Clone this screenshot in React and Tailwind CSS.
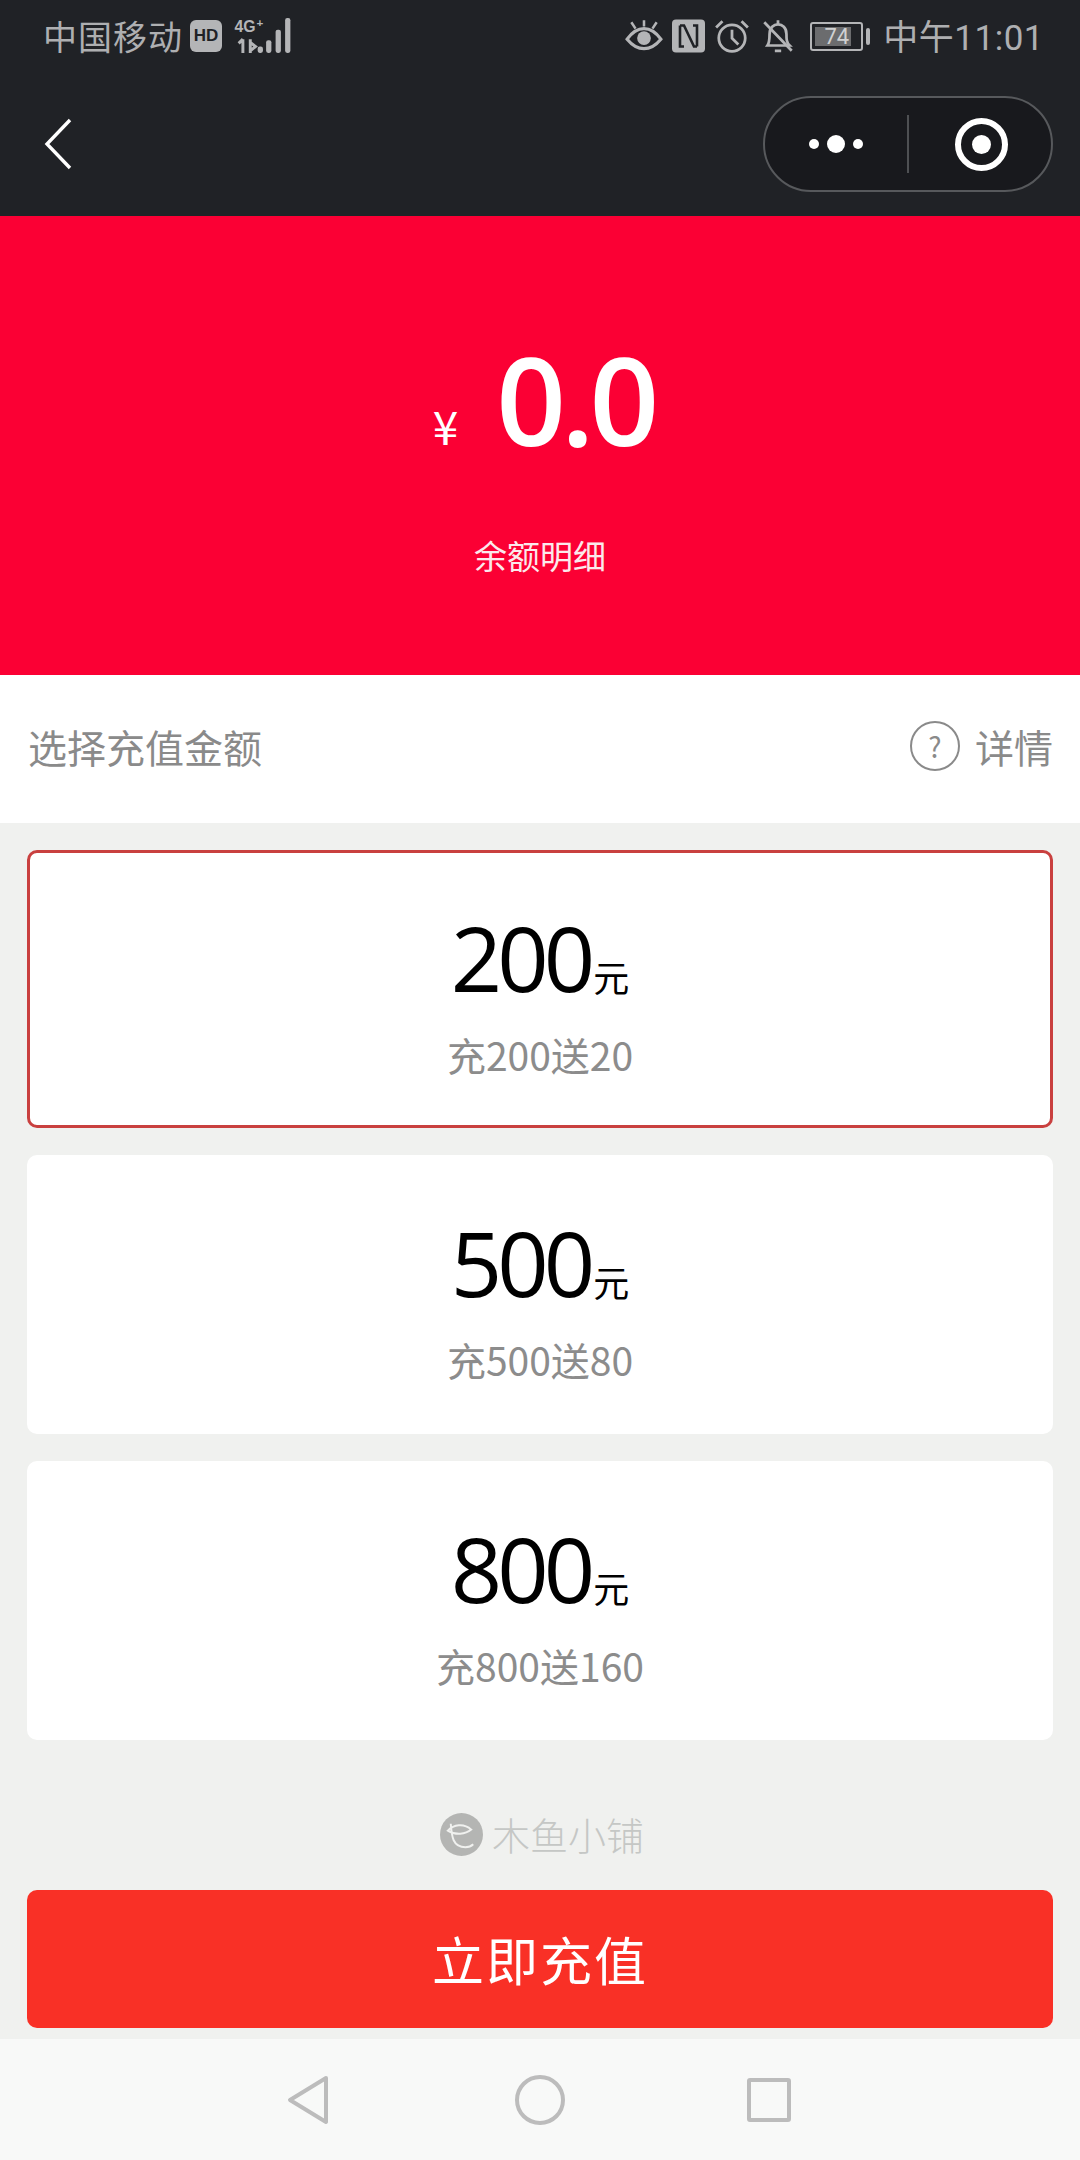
const cjk = "font-['Noto_Sans_CJK_SC','Noto_Sans',sans-serif]";

function Signal() {
  return (
    <svg width="60" height="38" viewBox="0 0 56 36" className="block">
      <text x="0" y="14" fontSize="15" fontWeight="700" fill="#b4b5b7" fontFamily="Liberation Sans">4G</text>
      <text x="21" y="9" fontSize="11" fontWeight="700" fill="#b4b5b7" fontFamily="Liberation Sans">+</text>
      <path d="M8 21v13M4 25l4-4M15 21v13M15 24l5 4-5 4" stroke="#b4b5b7" strokeWidth="2.8" fill="none" />
      <rect x="22" y="28" width="5" height="6" rx="2" fill="#b4b5b7" />
      <rect x="30" y="22" width="5" height="12" rx="2" fill="#b4b5b7" />
      <rect x="39" y="12" width="5" height="22" rx="2" fill="#b4b5b7" />
      <rect x="48" y="1" width="5" height="33" rx="2" fill="#b4b5b7" />
    </svg>
  );
}

function StatusBar() {
  return (
    <div className={`h-[72px] pl-[43px] pr-[36px] flex items-center justify-between text-[#aeafb1] ${cjk}`}>
      <div className="flex items-center">
        <span className="text-[34px] leading-none tracking-[1px]">中国移动</span>
        <span className="ml-[7px] w-[32px] h-[32px] rounded-[6px] bg-[#b4b5b7] text-[#202226] text-[17px] leading-[32px] font-bold text-center font-['Liberation_Sans',sans-serif]">HD</span>
        <span className="ml-[12px]"><Signal /></span>
      </div>
      <div className="flex items-center">
        <svg width="38" height="36" viewBox="0 0 36 34" fill="none" stroke="#b4b5b7" strokeWidth="3">
          <path d="M2 20c5-7 10-10 16-10s11 3 16 10c-5 6-10 9-16 9s-11-3-16-9z" />
          <circle cx="18" cy="19" r="6.5" fill="#b4b5b7" stroke="none" />
          <path d="M18 2v6M6 4l4 6M30 4l-4 6" strokeWidth="2.4" />
        </svg>
        <svg width="33" height="34" viewBox="0 0 33 33" className="ml-[9px]">
          <rect width="33" height="33" rx="4" fill="#b4b5b7" />
          <path d="M8 6h4l10 21h3M25 27V6h-4M8 6v21h4" fill="none" stroke="#202226" strokeWidth="2.6" />
        </svg>
        <svg width="36" height="36" viewBox="0 0 34 34" fill="none" stroke="#b4b5b7" strokeWidth="2.6" className="ml-[9px]">
          <circle cx="17" cy="19" r="12.5" />
          <path d="M17 11v8l6 6" />
          <path d="M2 9l6-6M32 9l-6-6" />
        </svg>
        <svg width="34" height="38" viewBox="0 0 32 36" fill="none" stroke="#b4b5b7" strokeWidth="2.6" className="ml-[11px]">
          <path d="M6 27c2-3 2-6 2-11 0-6 4-9 8-9s8 3 8 9c0 5 0 8 3 11z" />
          <path d="M13 32h6M16 3v4M3 5l26 27" />
        </svg>
        <div className="ml-[15px] w-[53px] h-[29px] rounded-[3px] border-2 border-[#b4b5b7] p-[3px] relative">
          <div className="h-full w-[36px] bg-[#6b6c6e]" />
          <span className="absolute inset-0 text-center text-[#d0d1d2] text-[22px] leading-[25px] font-['Roboto',sans-serif]">74</span>
        </div>
        <div className="ml-[3px] w-[4px] h-[17px] rounded-[2px] bg-[#b4b5b7]" />
        <span className="ml-[13px] text-[35px] leading-none tracking-[0.5px]">中午<span className="font-['Roboto',sans-serif]">11:01</span></span>
      </div>
    </div>
  );
}

function NavBar() {
  return (
    <div className="h-[144px] pl-[44px] pr-[27px] pt-[24px] flex justify-between items-start">
      <svg width="28" height="52" viewBox="0 0 28 52" fill="none" stroke="#ffffff" strokeWidth="3.4" className="mt-[22px]">
        <path d="M26 2L3 26l23 24" />
      </svg>
      <div className="w-[290px] h-[96px] rounded-[48px] border-2 border-[#57595c] bg-[#18191d] flex items-center">
        <div className="w-[142px] flex items-center justify-center gap-[8px]">
          <span className="w-[10px] h-[10px] rounded-full bg-white" />
          <span className="w-[18px] h-[18px] rounded-full bg-white" />
          <span className="w-[10px] h-[10px] rounded-full bg-white" />
        </div>
        <div className="w-[2px] h-[58px] bg-[#4e5053]" />
        <div className="flex-1 flex items-center justify-center pl-[2px]">
          <div className="w-[53px] h-[53px] rounded-full border-[6px] border-white flex items-center justify-center">
            <span className="w-[19px] h-[19px] rounded-full bg-white" />
          </div>
        </div>
      </div>
    </div>
  );
}

function Card({ amount, desc, active }) {
  return (
    <div className={`rounded-[10px] bg-white flex flex-col items-center ${active ? "h-[278px] border-[3px] border-[#c9403f] pt-[59px]" : "h-[279px] pt-[62px]"}`}>
      <div className="flex items-baseline h-[90px] text-black">
        <span className="text-[90px] leading-[90px] tracking-[-5px] font-['Open_Sans',sans-serif]">{amount}</span>
        <span className="ml-[3px] text-[36px] leading-none">元</span>
      </div>
      <div className="mt-[30px] text-[39px] leading-[44px] text-[#8c8c8c]">{desc}</div>
    </div>
  );
}

export default function App() {
  return (
    <div className={`w-[1080px] h-[2160px] flex flex-col bg-[#f0f1ef] overflow-hidden ${cjk}`}>
      <div className="bg-[#202226]">
        <StatusBar />
        <NavBar />
      </div>
      <div className="h-[459px] bg-[#fb0034] flex flex-col items-center text-white">
        <div className="h-[130px] mt-[118px] pl-[7px] flex items-end">
          <span className="text-[46px] leading-none mb-[16px] mr-[38px]">¥</span>
          <span className="text-[122px] leading-[130px] font-semibold tracking-[-5px] font-['Open_Sans',sans-serif]">0.0</span>
        </div>
        <div className="mt-[69px] text-[33px] leading-[44px] text-[#fbe9ec]">余额明细</div>
      </div>
      <div className="h-[148px] bg-white pl-[28px] pr-[27px] pb-[6px] flex items-center justify-between text-[39px] text-[#8a8a8a]">
        <span className="leading-none">选择充值金额</span>
        <div className="flex items-center">
          <span className="w-[50px] h-[50px] rounded-full border-2 border-[#8a8a8a] text-[28px] leading-[46px] text-center">?</span>
          <span className="ml-[15px] leading-none">详情</span>
        </div>
      </div>
      <div className="px-[27px] pt-[27px] flex flex-col gap-[27px]">
        <Card amount="200" desc="充200送20" active />
        <Card amount="500" desc="充500送80" />
        <Card amount="800" desc="充800送160" />
      </div>
      <div className="h-[150px] pt-[38px] pl-[4px] flex items-center justify-center">
        <svg width="43" height="43" viewBox="0 0 44 44" fill="none">
          <circle cx="22" cy="22" r="22" fill="#b4b5b3" />
          <path d="M11 11c1 13 2 24 15 24 4 0 7-2 8-3M8 18c6-6 16-8 24-1-6 5-16 6-24 1z" stroke="#f0f1ef" strokeWidth="2" />
        </svg>
        <span className="ml-[9px] text-[38px] leading-none text-[#c5c7c5] font-extralight">木鱼小铺</span>
      </div>
      <button className="mx-[27px] h-[138px] rounded-[10px] bg-[#f93026] text-white text-[52px] tracking-[2px]">立即充值</button>
      <div className="mt-[11px] flex-1 bg-[#f8f9f8] flex items-center justify-center pr-[2px]">
        <svg width="42" height="50" viewBox="0 0 42 50" fill="none" stroke="#bcbcbc" strokeWidth="4" strokeLinejoin="round">
          <path d="M39 3L3 25l36 22z" />
        </svg>
        <span className="ml-[186px] w-[50px] h-[50px] rounded-full border-[4px] border-[#bcbcbc]" />
        <span className="ml-[182px] w-[44px] h-[44px] rounded-[3px] border-[4px] border-[#bcbcbc]" />
      </div>
    </div>
  );
}
